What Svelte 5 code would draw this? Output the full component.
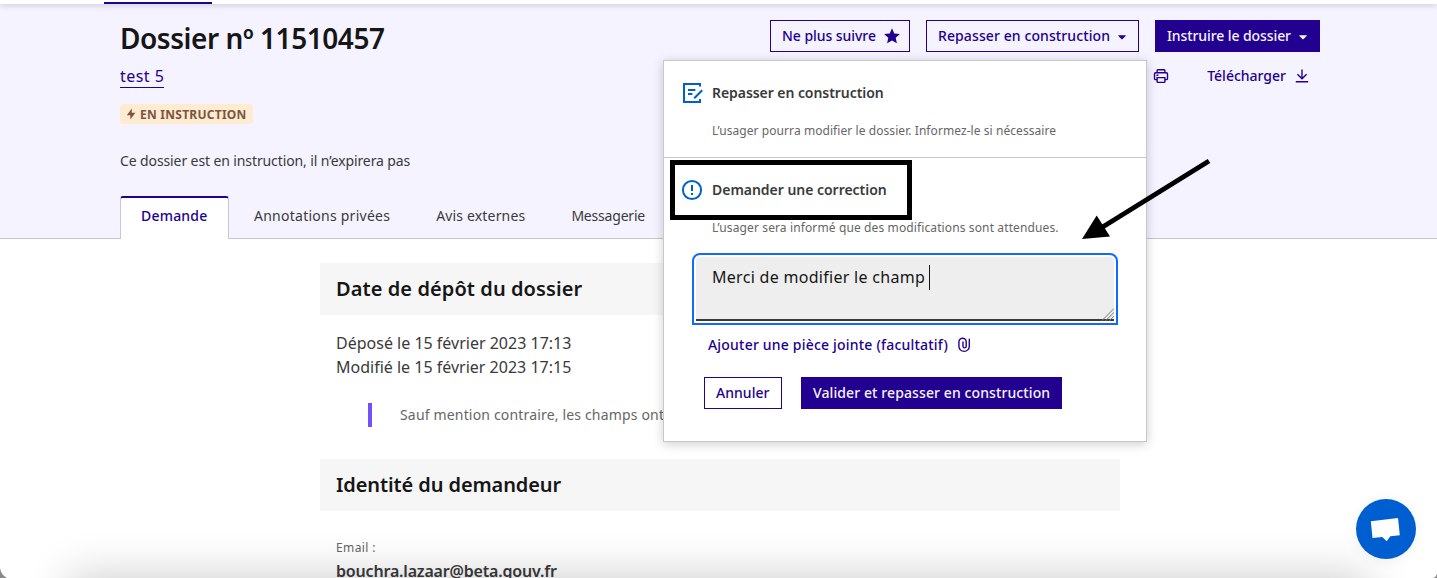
<script>
  const tabs = ['Annotations privées', 'Avis externes', 'Messagerie'];
  let message = 'Merci de modifier le champ';
</script>

<div class="page">
  <div class="topbar"><span class="current"></span></div>

  <header>
    <div class="row">
      <div class="summary">
        <h1>Dossier nº 11510457</h1>
        <a class="procedure" href="#procedure">test 5</a>
        <p class="badge">
          <svg width="10" height="12" viewBox="0 0 10 12"><path d="M5.8 0.4V4.7H9.4L4.3 11.6V7.3H0.8Z" fill="#7a5543" /></svg>
          <span>EN INSTRUCTION</span>
        </p>
        <p class="expiry">Ce dossier est en instruction, il n’expirera pas</p>
      </div>

      <div class="actions">
        <div class="line">
          <button class="btn follow">
            <span>Ne plus suivre</span>
            <svg width="16" height="16" viewBox="0 0 16 16"><path d="M8 0.3 10.3 5.4 15.9 6 11.7 9.8 12.9 15.3 8 12.5 3.1 15.3 4.3 9.8 0.1 6 5.7 5.4Z" fill="currentColor" /></svg>
          </button>
          <button class="btn back">
            <span>Repasser en construction</span>
            <svg class="chevron" width="8" height="5" viewBox="0 0 8 5"><path d="M0.6 0.3H7.4Q8 0.4 7.6 0.9L4.4 4.2Q4 4.5 3.6 4.2L0.4 0.9Q0 0.4 0.6 0.3Z" fill="currentColor" /></svg>
          </button>
          <button class="btn primary instruct">
            <span>Instruire le dossier</span>
            <svg class="chevron" width="8" height="5" viewBox="0 0 8 5"><path d="M0.6 0.3H7.4Q8 0.4 7.6 0.9L4.4 4.2Q4 4.5 3.6 4.2L0.4 0.9Q0 0.4 0.6 0.3Z" fill="currentColor" /></svg>
          </button>
        </div>
        <div class="line tools">
          <svg width="16" height="16" viewBox="0 0 16 16" fill="none" stroke="currentColor" stroke-width="1.4"><path d="M4.1 4.6V2.5Q4.1 1.7 4.9 1.7H11.1Q11.9 1.7 11.9 2.5V4.6M4.1 11.6H2.7Q1.5 11.6 1.5 10.4V5.9Q1.5 4.7 2.7 4.7H13.3Q14.5 4.7 14.5 5.9V10.4Q14.5 11.6 13.3 11.6H11.9M4.1 9.6H11.9V13.6Q11.9 14.4 11.1 14.4H4.9Q4.1 14.4 4.1 13.6ZM3.4 7.3H5.4" /></svg>
          <span class="download">Télécharger</span>
          <svg width="16" height="16" viewBox="0 0 16 16" fill="none" stroke="currentColor" stroke-width="1.4"><path d="M8 1.5V10.4M3.4 6.2 8 10.8 12.6 6.2M1.8 13.8H14.2" /></svg>
        </div>
      </div>
    </div>

    <nav>
      <a class="tab active" href="#demande">Demande</a>
      {#each tabs as tab}
        <a class="tab" href="#tab">{tab}</a>
      {/each}
    </nav>
  </header>

  <main>
    <h2>Date de dépôt du dossier</h2>
    <div class="dates">
      <p>Déposé le 15 février 2023 17:13</p>
      <p>Modifié le 15 février 2023 17:15</p>
    </div>
    <p class="notice">Sauf mention contraire, les champs ont</p>
    <h2 class="identity">Identité du demandeur</h2>
    <div class="field">
      <p class="label">Email :</p>
      <p class="value">bouchra.lazaar@beta.gouv.fr</p>
    </div>
  </main>

  <section class="menu">
    <div class="item">
      <svg class="icon" width="22" height="22" viewBox="0 0 22 22" fill="none" stroke="#005fd0" stroke-width="2"><path d="M19 4.6V2H3V20H19V17M7 8H14.4M7 12H11.4" /><path d="M13.2 16.3 21.2 8.3" /></svg>
      <div>
        <h3>Repasser en construction</h3>
        <p class="desc first">L’usager pourra modifier le dossier. Informez-le si nécessaire</p>
      </div>
    </div>
    <div class="item second">
      <svg class="icon" width="22" height="22" viewBox="0 0 22 22" fill="none" stroke="#005fd0" stroke-width="2"><circle cx="11" cy="11" r="9.1" /><path d="M11 5.9V12M11 14V16" /></svg>
      <div>
        <h3 class="correction">Demander une correction</h3>
        <p class="desc">L’usager sera informé que des modifications sont attendues.</p>
      </div>
    </div>
    <div class="editor">
      <span>{message}</span><i class="caret"></i>
      <svg class="grip" width="13" height="13" viewBox="0 0 13 13" stroke="#777" stroke-width="1"><path d="M0.5 13 13 0.5M4.3 13 13 4.3M8.1 13 13 8.1" /></svg>
    </div>
    <div class="attach">
      <span>Ajouter une pièce jointe (facultatif)</span>
      <svg width="14" height="16" viewBox="0 0 14 16" fill="none" stroke="currentColor" stroke-width="1.4"><path d="M9.2 4.6V9.3A1.6 1.6 0 0 1 6 9.3V4.6M9.2 5.2V4.6A3.4 3.4 0 0 0 1.9 5.1V9.2A5 5 0 0 0 12.3 9.2V1.7" /></svg>
    </div>
    <div class="buttons">
      <button class="btn cancel">Annuler</button>
      <button class="btn primary submit">Valider et repasser en construction</button>
    </div>
  </section>

  <div class="highlight"></div>
  <svg class="arrow" width="140" height="90" viewBox="1075 155 140 90"><path d="M1209 161 1101 228" stroke="#000" stroke-width="5" /><path d="M1082 239 1096.7 215.5 1110 236.5Z" /></svg>

  <div class="fade"></div>
  <div class="chat">
    <svg width="60" height="60" viewBox="0 0 60 60"><path d="M14.8 22.2 42 19 43.8 36.2 34.3 37.2 30.7 42.2 26.3 38 16.5 39Z" fill="#fff" /></svg>
  </div>
  <svg class="corner left" width="7" height="10" viewBox="0 0 7 10"><path d="M0 0Q1 7 7 10H0Z" fill="#8a8a8a" /></svg>
  <svg class="corner right" width="4" height="4" viewBox="0 0 4 4"><path d="M4 0V4H0Q3 3 4 0Z" fill="#8a8a8a" /></svg>
</div>

<style>
  :global(body) { background: #fff; overflow: hidden; }
  .page { position: relative; height: 578px; overflow: hidden; font-family: 'Noto Sans', sans-serif; color: #3a3a3a; background: #fff; font-size: 14px; line-height: 24px; }
  h1, h2, h3, p { margin: 0; }
  a { text-decoration: none; color: inherit; }
  svg { display: block; flex: none; }
  .topbar { position: relative; z-index: 1; height: 4px; background: #fff; box-shadow: 0 1px 6px rgba(0, 0, 18, 0.22); display: flex; align-items: flex-end; padding-left: 104px; }
  .current { width: 108px; height: 2px; background: #220090; }

  header { height: 234px; background: #f5f3ff; border-bottom: 1px solid #c8c7cb; display: flex; flex-direction: column; justify-content: space-between; }
  .row { width: 1200px; margin-left: 120px; padding-top: 16px; display: flex; justify-content: space-between; }
  .summary { display: flex; flex-direction: column; align-items: flex-start; }
  h1 { font-size: 28px; line-height: 36px; font-weight: 600; letter-spacing: -0.45px; color: #161616; }
  .procedure { margin-top: 8px; height: 23px; border-bottom: 1px solid #220090; color: #220090; font-size: 16px; letter-spacing: 0.45px; }
  .badge { margin-top: 16px; width: 133px; height: 20px; box-sizing: border-box; padding-left: 6px; display: flex; align-items: center; gap: 4px; border-radius: 4px; background: #feebd0; color: #7a5543; font-size: 12px; line-height: 22px; font-weight: 700; letter-spacing: 0.25px; }
  .badge span { padding-top: 1px; }
  .expiry { margin-top: 25px; letter-spacing: -0.11px; }

  .actions { display: flex; flex-direction: column; gap: 8px; }
  .line { display: flex; gap: 16px; height: 32px; align-items: center; color: #220090; font-weight: 500; }
  .btn { height: 32px; box-sizing: border-box; padding: 0 0 0 11px; border: 1px solid #220090; background: transparent; color: #220090; font: 500 14px/24px 'Noto Sans', sans-serif; display: flex; align-items: center; gap: 8px; white-space: nowrap; text-align: left; }
  .primary { background: #220090; color: #f5f3ff; }
  .chevron { margin-top: 2px; }
  .follow { width: 140px; letter-spacing: -0.05px; }
  .back { width: 213px; letter-spacing: 0.1px; }
  .instruct { width: 165px; letter-spacing: -0.09px; }
  .tools { justify-content: flex-end; gap: 8px; padding-right: 10px; }
  .download { margin-left: 30px; letter-spacing: 0; }

  nav { display: flex; height: 43px; margin: 0 0 -1px 120px; }
  .tab { padding: 8px 0 0 25px; margin-right: 21px; letter-spacing: 0.25px; }
  .tab:nth-child(3) { letter-spacing: 0.17px; }
  .tab:nth-child(4) { letter-spacing: -0.2px; }
  .active { width: 109px; box-sizing: border-box; margin-right: 0; padding: 6px 0 0 20px; border: 1px solid #c8c7cb; border-width: 2px 1px 0; border-top-color: #220090; border-radius: 3px 3px 0 0; background: #fff; color: #220090; font-weight: 500; letter-spacing: 0.2px; }

  main { width: 800px; margin: 24px 0 0 320px; }
  h2 { height: 52px; box-sizing: border-box; padding: 12px 16px; background: #f6f6f6; color: #161616; font-size: 20px; line-height: 28px; font-weight: 600; letter-spacing: 0.08px; }
  .dates { padding: 16px 16px 24px; font-size: 16px; }
  .notice { margin: 0 0 32px 48px; border-left: 4px solid #7250fa; padding-left: 28px; color: #666; letter-spacing: 0.17px; }
  .identity { letter-spacing: -0.1px; }
  .field { padding: 25px 16px; }
  .label { font-size: 12px; color: #666; letter-spacing: 0.4px; line-height: 23px; }
  .value { font-size: 16px; font-weight: 600; letter-spacing: -0.18px; }

  .menu { position: absolute; z-index: 2; left: 663px; top: 60px; width: 484px; height: 382px; box-sizing: border-box; border: 1px solid #c8c7cb; background: #fff; box-shadow: 0 2px 10px rgba(0, 0, 18, 0.2); }
  .item { height: 97px; display: flex; gap: 9px; padding: 21px 0 0 17px; box-sizing: border-box; border-bottom: 1px solid #c8c7cb; }
  .second { border-bottom: 0; height: 95px; }
  h3 { margin-top: -1px; font-size: 14px; font-weight: 600; letter-spacing: -0.06px; line-height: 24px; }
  .correction { letter-spacing: -0.03px; }
  .desc { margin-top: 14px; font-size: 12px; color: #666; letter-spacing: 0.12px; }
  .first { letter-spacing: 0.07px; }
  .editor { position: relative; margin: 4px 32px 0; height: 64px; box-sizing: border-box; padding: 8px 16px; display: flex; background: #eee; border-bottom: 2px solid #3a3a3a; border-radius: 4px 4px 0 0; outline: 2px solid #1468ff; outline-offset: 2px; color: #161616; font-size: 16px; letter-spacing: 0.29px; }
  .caret { width: 1px; height: 25px; margin-left: 4px; background: #161616; }
  .grip { position: absolute; right: 0; bottom: -2px; }
  .attach { display: flex; align-items: center; gap: 9px; margin: 12px 0 0 44px; color: #220090; font-weight: 500; letter-spacing: 0.2px; }
  .buttons { display: flex; gap: 19px; margin: 20px 0 0 40px; }
  .cancel { width: 78px; letter-spacing: 0.04px; }
  .submit { width: 261px; letter-spacing: 0.1px; }

  .highlight { position: absolute; z-index: 3; left: 670px; top: 160px; width: 242px; height: 60px; box-sizing: border-box; border: 5px solid #000; }
  .arrow { position: absolute; z-index: 3; left: 1075px; top: 155px; }
  .fade { position: absolute; left: 0; right: 0; bottom: -60px; height: 60px; margin: 0 70px; box-shadow: 0 0 46px 2px rgba(0, 0, 0, 0.2); }
  .chat { position: absolute; left: 1356px; top: 499px; width: 60px; height: 60px; border-radius: 50%; background: #005fd0; box-shadow: 0 2px 14px rgba(0, 0, 0, 0.06); }
  .corner { position: absolute; bottom: 0; }
  .left { left: 0; }
  .right { right: 0; }
</style>
